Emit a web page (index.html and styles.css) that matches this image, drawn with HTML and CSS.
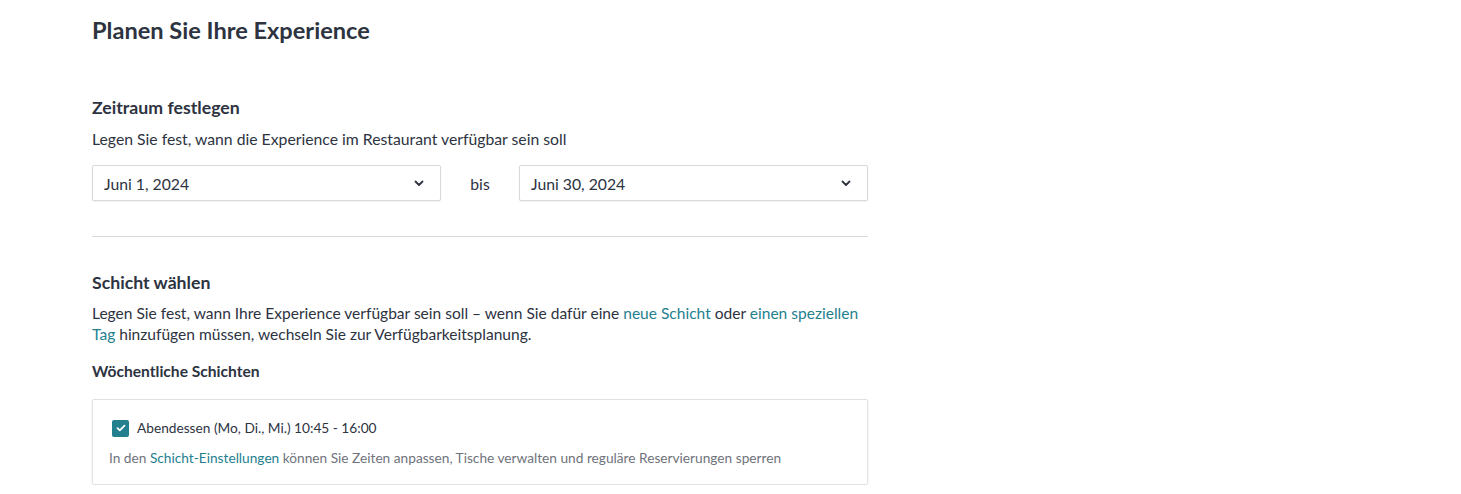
FILE: index.html
```html
<!DOCTYPE html>
<html lang="de">
<head>
  <meta charset="UTF-8" />
  <meta name="viewport" content="width=device-width, initial-scale=1.0"/>
  <title>Planen Sie Ihre Experience</title>
  <link rel="stylesheet" href="styles.css">
</head>
<body>
  <div class="page">
    <h1>Planen Sie Ihre Experience</h1>

    <section class="block">
      <h2>Zeitraum festlegen</h2>
      <p class="desc">Legen Sie fest, wann die Experience im Restaurant verfügbar sein soll</p>
      <div class="range">
        <div class="select">
          <span>Juni 1, 2024</span>
          <svg width="10" height="7" viewBox="0 0 10 7"><path d="M1.5 1.5 5 5l3.5-3.5" fill="none" stroke="#2d333f" stroke-width="1.8" stroke-linecap="round" stroke-linejoin="round"/></svg>
        </div>
        <span class="sep">bis</span>
        <div class="select">
          <span>Juni 30, 2024</span>
          <svg width="10" height="7" viewBox="0 0 10 7"><path d="M1.5 1.5 5 5l3.5-3.5" fill="none" stroke="#2d333f" stroke-width="1.8" stroke-linecap="round" stroke-linejoin="round"/></svg>
        </div>
      </div>
    </section>

    <hr class="divider">

    <section class="block">
      <h2>Schicht wählen</h2>
      <p class="desc narrow">Legen Sie fest, wann Ihre Experience verfügbar sein soll – wenn Sie dafür eine <a href="#">neue Schicht</a> oder <a href="#">einen speziellen</a><br><a href="#">Tag</a> hinzufügen müssen, wechseln Sie zur Verfügbarkeitsplanung.</p>
      <h3>Wöchentliche Schichten</h3>
      <div class="card">
        <label class="check">
          <span class="box">
            <svg width="10" height="8" viewBox="0 0 10 8"><path d="M1.5 4.2 3.8 6.3 8.5 1.7" fill="none" stroke="#fff" stroke-width="1.8" stroke-linecap="round" stroke-linejoin="round"/></svg>
          </span>
          Abendessen (Mo, Di., Mi.) 10:45 - 16:00
        </label>
        <p class="hint">In den <a href="#">Schicht-Einstellungen</a> können Sie Zeiten anpassen, Tische verwalten und reguläre Reservierungen sperren</p>
      </div>
    </section>
  </div>
</body>
</html>
```

FILE: styles.css
```css
body {
  margin: 0;
  font-family: Lato, "Open Sans", sans-serif;
  color: #2d333f;
  background-color: #fff;
}

.page {
  width: 776px;
  padding: 14px 0 0 92px;
}

h1 {
  font-size: 23.6px;
  font-weight: 700;
  margin: 0 0 50px;
  line-height: 32px;
}

h2 {
  font-size: 17.7px;
  font-weight: 700;
  margin: 0 0 8px;
  line-height: 24px;
}

h3 {
  font-size: 15.6px;
  font-weight: 700;
  margin: 16px 0 18px;
  line-height: 20px;
}

.desc {
  font-size: 15.75px;
  line-height: 21px;
  margin: 0;
}

.desc.narrow {
  font-size: 15.55px;
}

a {
  color: #247f8f;
  text-decoration: none;
}

.range {
  display: flex;
  align-items: center;
  margin-top: 16px;
}

.select {
  flex: 1;
  height: 36px;
  box-sizing: border-box;
  border: 1px solid #d8d9db;
  border-radius: 2px;
  box-shadow: 0 1px 2px rgba(0,0,0,0.06);
  display: flex;
  align-items: center;
  justify-content: space-between;
  padding: 0 16px 0 11px;
  font-size: 15.75px;
}

.sep {
  width: 78px;
  text-align: center;
  font-size: 15.75px;
}

.divider {
  border: none;
  border-top: 1px solid #d8d9db;
  margin: 35px 0 34px;
}

.card {
  border: 1px solid #e1e2e4;
  border-radius: 2px;
  box-shadow: 0 1px 3px rgba(0,0,0,0.08);
  padding: 18px 16px 17px 16px;
  margin-top: 1px;
}

.check {
  display: flex;
  align-items: center;
  font-size: 13.7px;
  line-height: 20px;
  margin-left: 3px;
}

.box {
  width: 17px;
  height: 17px;
  border-radius: 2px;
  background-color: #247f8f;
  display: flex;
  align-items: center;
  justify-content: center;
  margin-right: 8px;
}

.hint {
  margin: 11px 0 0;
  font-size: 13.7px;
  line-height: 18px;
  color: #6f737b;
}
```
